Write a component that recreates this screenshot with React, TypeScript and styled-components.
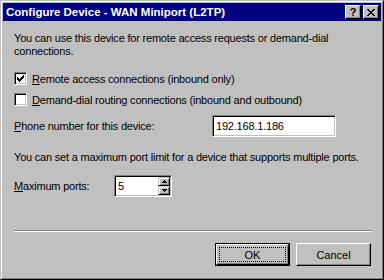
import React from "react";
import styled, { createGlobalStyle } from "styled-components";

const GlobalStyle = createGlobalStyle`
  html, body {
    margin: 0;
    padding: 0;
    background: #c0c0c0;
  }
  body {
    font-family: "Liberation Sans", Arial, sans-serif;
    font-size: 11px;
    color: #000;
    -webkit-font-smoothing: none;
  }
`;

const Window = styled.div`
  width: 384px;
  height: 280px;
  box-sizing: border-box;
  background: #c0c0c0;
  border-top: 1px solid #c0c0c0;
  border-left: 1px solid #c0c0c0;
  border-right: 1px solid #000;
  border-bottom: 1px solid #000;
  display: flex;
`;

const Frame = styled.div`
  flex: 1;
  display: flex;
  flex-direction: column;
  padding: 1px;
  border-top: 1px solid #fff;
  border-left: 1px solid #fff;
  border-right: 1px solid #808080;
  border-bottom: 1px solid #808080;
`;

const TitleBar = styled.div`
  height: 18px;
  background: #000080;
  display: flex;
  align-items: center;
  padding: 0 2px 0 3px;
  color: #fff;
`;

const TitleText = styled.span`
  flex: 1;
  font-weight: bold;
  font-size: 11.5px;
  white-space: nowrap;
`;

const CaptionButton = styled.div<{ $gap?: boolean }>`
  width: 16px;
  height: 14px;
  box-sizing: border-box;
  background: #c0c0c0;
  border-top: 1px solid #fff;
  border-left: 1px solid #fff;
  border-right: 1px solid #000;
  border-bottom: 1px solid #000;
  box-shadow: inset -1px -1px 0 #808080;
  margin-left: ${(p) => (p.$gap ? "2px" : "0")};
  display: flex;
  align-items: center;
  justify-content: center;
  color: #000;
  font-weight: bold;
  font-size: 11px;
  line-height: 12px;
`;

const Body = styled.div`
  flex: 1;
  display: flex;
  flex-direction: column;
  padding: 11px 10px 0 11px;
  letter-spacing: -0.2px;
`;

const Paragraph = styled.p<{ $top?: number }>`
  margin: ${(p) => p.$top ?? 0}px 0 0;
  line-height: 13px;
  width: 356px;
`;

const CheckRow = styled.label<{ $top: number }>`
  display: flex;
  align-items: center;
  height: 13px;
  margin-top: ${(p) => p.$top}px;
  gap: 5px;
`;

const CheckBox = styled.span`
  width: 13px;
  height: 13px;
  box-sizing: border-box;
  background: #fff;
  border-top: 1px solid #808080;
  border-left: 1px solid #808080;
  border-right: 1px solid #fff;
  border-bottom: 1px solid #fff;
  box-shadow: inset 1px 1px 0 #000, inset -1px -1px 0 #c0c0c0;
  display: flex;
  align-items: center;
  justify-content: center;
`;

const Key = styled.span`
  text-decoration: underline;
`;

const FieldRow = styled.div<{ $top: number }>`
  display: flex;
  align-items: center;
  height: 22px;
  margin-top: ${(p) => p.$top}px;
`;

const FieldLabel = styled.span<{ $width: number }>`
  width: ${(p) => p.$width}px;
`;

const Sunken = styled.div<{ $width: number }>`
  width: ${(p) => p.$width}px;
  height: 22px;
  box-sizing: border-box;
  background: #fff;
  border-top: 1px solid #808080;
  border-left: 1px solid #808080;
  border-right: 1px solid #fff;
  border-bottom: 1px solid #fff;
  box-shadow: inset 1px 1px 0 #000, inset -1px -1px 0 #c0c0c0;
  display: flex;
  align-items: center;
  padding-left: 3px;
`;

const SpinValue = styled.span`
  flex: 1;
`;

const SpinButtons = styled.div`
  display: flex;
  flex-direction: column;
  align-self: stretch;
  padding: 1px 1px 1px 0;
`;

const SpinButton = styled.div`
  flex: 1;
  width: 12px;
  box-sizing: border-box;
  background: #c0c0c0;
  border-top: 1px solid #c0c0c0;
  border-left: 1px solid #c0c0c0;
  border-right: 1px solid #000;
  border-bottom: 1px solid #000;
  box-shadow: inset 1px 1px 0 #fff, inset -1px -1px 0 #808080;
  display: flex;
  align-items: center;
  justify-content: center;
`;

const Separator = styled.div`
  margin-top: 33px;
  height: 0;
  border-top: 1px solid #808080;
  border-bottom: 1px solid #fff;
`;

const ButtonRow = styled.div`
  display: flex;
  justify-content: flex-end;
  gap: 6px;
  margin-top: 11px;
  letter-spacing: 0;
`;

const PushButton = styled.div<{ $default?: boolean }>`
  width: 75px;
  height: 23px;
  box-sizing: border-box;
  background: #c0c0c0;
  border: ${(p) => (p.$default ? "1px solid #000" : "none")};
  display: flex;
`;

const Bevel = styled.div`
  flex: 1;
  display: flex;
  align-items: center;
  justify-content: center;
  border-top: 1px solid #fff;
  border-left: 1px solid #fff;
  border-right: 1px solid #000;
  border-bottom: 1px solid #000;
  box-shadow: inset -1px -1px 0 #808080;
  padding: 2px;
`;

const Focus = styled.div<{ $on?: boolean }>`
  flex: 1;
  align-self: stretch;
  display: flex;
  align-items: center;
  justify-content: center;
  outline: ${(p) => (p.$on ? "1px dotted #000" : "none")};
  outline-offset: -1px;
`;

const CheckMark = () => (
  <svg width="7" height="7" viewBox="0 0 7 7" shapeRendering="crispEdges">
    <path
      d="M6 0h1v3h-1zM5 1h1v3h-1zM4 2h1v3h-1zM0 2h1v3h-1zM1 3h1v3h-1zM2 4h1v3h-1zM3 3h1v3h-1z"
      fill="#000"
    />
  </svg>
);

const CloseGlyph = () => (
  <svg width="8" height="7" viewBox="0 0 8 7" shapeRendering="crispEdges">
    <path
      d="M0 0h2v1h-2zM6 0h2v1h-2zM1 1h2v1h-2zM5 1h2v1h-2zM2 2h4v1h-4zM3 3h2v1h-2zM2 4h4v1h-4zM1 5h2v1h-2zM5 5h2v1h-2zM0 6h2v1h-2zM6 6h2v1h-2z"
      fill="#000"
    />
  </svg>
);

const Arrow = ({ up }: { up?: boolean }) => (
  <svg width="5" height="3" viewBox="0 0 5 3" shapeRendering="crispEdges">
    <path
      d={up ? "M2 0h1v1h-1zM1 1h3v1h-3zM0 2h5v1h-5z" : "M0 0h5v1h-5zM1 1h3v1h-3zM2 2h1v1h-1z"}
      fill="#000"
    />
  </svg>
);

export default function App() {
  return (
    <>
      <GlobalStyle />
      <Window>
        <Frame>
          <TitleBar>
            <TitleText>Configure Device - WAN Miniport (L2TP)</TitleText>
            <CaptionButton>?</CaptionButton>
            <CaptionButton $gap>
              <CloseGlyph />
            </CaptionButton>
          </TitleBar>
          <Body>
            <Paragraph>
              You can use this device for remote access requests or demand-dial connections.
            </Paragraph>
            <CheckRow $top={14}>
              <CheckBox>
                <CheckMark />
              </CheckBox>
              <span>
                <Key>R</Key>emote access connections (inbound only)
              </span>
            </CheckRow>
            <CheckRow $top={8}>
              <CheckBox />
              <span>
                <Key>D</Key>emand-dial routing connections (inbound and outbound)
              </span>
            </CheckRow>
            <FieldRow $top={9}>
              <FieldLabel $width={198}>
                <Key>P</Key>hone number for this device:
              </FieldLabel>
              <Sunken $width={124}>192.168.1.186</Sunken>
            </FieldRow>
            <Paragraph $top={14}>
              You can set a maximum port limit for a device that supports multiple ports.
            </Paragraph>
            <FieldRow $top={11}>
              <FieldLabel $width={100}>
                <Key>M</Key>aximum ports:
              </FieldLabel>
              <Sunken $width={58}>
                <SpinValue>5</SpinValue>
                <SpinButtons>
                  <SpinButton>
                    <Arrow up />
                  </SpinButton>
                  <SpinButton>
                    <Arrow />
                  </SpinButton>
                </SpinButtons>
              </Sunken>
            </FieldRow>
            <Separator />
            <ButtonRow>
              <PushButton $default>
                <Bevel>
                  <Focus $on>OK</Focus>
                </Bevel>
              </PushButton>
              <PushButton>
                <Bevel>
                  <Focus>Cancel</Focus>
                </Bevel>
              </PushButton>
            </ButtonRow>
          </Body>
        </Frame>
      </Window>
    </>
  );
}
